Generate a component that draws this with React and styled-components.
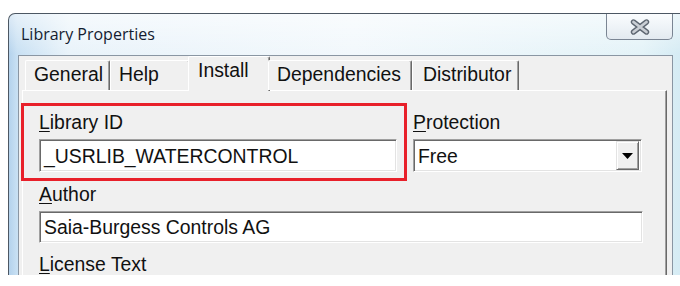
import React from "react";
import styled, { createGlobalStyle } from "styled-components";

const Global = createGlobalStyle`
  html, body { margin: 0; padding: 0; background: #fff; }
  * { box-sizing: border-box; }
`;

const Page = styled.div`
  width: 680px;
  height: 286px;
  overflow: hidden;
  background: #fff;
  padding: 13px 0 0 8px;
`;

const Window = styled.div`
  width: 690px;
  height: 262px;
  overflow: hidden;
  border: 1px solid #4c5763;
  border-bottom: none;
  border-top-left-radius: 7px;
  display: flex;
  flex-direction: column;
  background:
    linear-gradient(180deg, rgba(255,255,255,0.55) 0, rgba(255,255,255,0) 40px),
    linear-gradient(90deg, #b4d2ec 0, #c8e0f3 8px, #e9f3fa 60px, #f2f8fc 50%, #e4f3f8 92%, #cfe8f2 100%);
`;

const TitleBar = styled.div`
  width: 664px;
  height: 41px;
  flex: none;
  display: flex;
  align-items: flex-start;
  padding-left: 12px;
`;

const Title = styled.div`
  font-family: "Open Sans", "Noto Sans", sans-serif;
  font-size: 16px;
  line-height: 20px;
  color: #141c30;
  padding-top: 10px;
`;

const CloseButton = styled.div`
  margin-left: auto;
  margin-top: -1px;
  width: 67px;
  height: 27px;
  border: 1px solid #7a8593;
  border-top: none;
  border-radius: 0 0 5px 5px;
  background: linear-gradient(180deg, #fbfdfe 0%, #eef3f7 55%, #e3eaf0 100%);
  display: flex;
  align-items: center;
  justify-content: center;
  padding-top: 1px;
`;

const Body = styled.div`
  flex: 1;
  display: flex;
  padding-left: 9px;
`;

const Client = styled.div`
  width: 655px;
  background: #f0f0f0;
  border-top: 1px solid #8a96a3;
  border-left: 1px solid #8a96a3;
  border-right: 1px solid #8a96a3;
  display: flex;
  flex-direction: column;
  padding-left: 3px;
`;

const TabStrip = styled.div`
  height: 34px;
  display: flex;
  align-items: flex-end;
  padding-left: 3px;
  position: relative;
  z-index: 1;
`;

const Tab = styled.div`
  width: ${(p) => p.$w}px;
  height: ${(p) => (p.$active ? 35 : 30)}px;
  margin: ${(p) => (p.$active ? "0 -2px -1px -2px" : "0")};
  padding-left: ${(p) => p.$pl}px;
  padding-top: 2px;
  background: #f0f0f0;
  border-top: 1px solid #ffffff;
  border-left: 1px solid #ffffff;
  border-right: 1px solid #696969;
  box-shadow: inset -1px 0 0 #a0a0a0;
  border-radius: 2px 2px 0 0;
  font-family: "Liberation Sans", Arial, sans-serif;
  font-size: 19.4px;
  line-height: 22px;
  color: #111;
  white-space: nowrap;
`;

const TabBody = styled.div`
  position: relative;
  flex: 1;
  width: 645px;
  background: #f0f0f0;
  border-top: 1px solid #ffffff;
  border-left: 1px solid #ffffff;
  border-right: 1px solid #696969;
  box-shadow: inset -1px 0 0 #a0a0a0;
  padding: 20px 0 0 16px;
  font-family: "Liberation Sans", Arial, sans-serif;
  font-size: 19.4px;
  line-height: 22px;
  color: #111;
`;

const Row = styled.div`
  display: flex;
  gap: 16px;
`;

const Field = styled.div`
  display: flex;
  flex-direction: column;
  width: ${(p) => p.$w}px;
  margin-top: ${(p) => p.$mt || 0}px;
`;

const Label = styled.div`
  height: 22px;
  margin-bottom: ${(p) => (p.$last ? 0 : 6)}px;
  white-space: nowrap;
  u { text-decoration-thickness: 1px; text-underline-offset: 2px; }
`;

const Input = styled.div`
  height: ${(p) => p.$h}px;
  background: #fff;
  border-top: 1px solid #a0a0a0;
  border-left: 1px solid #a0a0a0;
  border-right: 1px solid #ffffff;
  border-bottom: 1px solid #ffffff;
  box-shadow: inset 1px 1px 0 #696969, inset -1px -1px 0 #e3e3e3;
  display: flex;
  align-items: center;
  padding-left: 4px;
  white-space: nowrap;
  overflow: hidden;
`;

const Select = styled(Input)`
  padding-right: 2px;
  justify-content: space-between;
`;

const DropButton = styled.div`
  width: 23px;
  height: 29px;
  background: #f0f0f0;
  border-top: 1px solid #e3e3e3;
  border-left: 1px solid #e3e3e3;
  border-right: 1px solid #696969;
  border-bottom: 1px solid #696969;
  box-shadow: inset 1px 1px 0 #fff, inset -1px -1px 0 #a0a0a0;
  display: flex;
  align-items: center;
  justify-content: center;
`;

const Highlight = styled.div`
  position: absolute;
  left: -2px;
  top: 12px;
  width: 386px;
  height: 78px;
  border: 3px solid #e8202a;
  pointer-events: none;
`;

const tabs = [
  { label: "General", w: 85, pl: 8 },
  { label: "Help", w: 80, pl: 8 },
  { label: "Install", w: 82, pl: 9, active: true },
  { label: "Dependencies", w: 144, pl: 8 },
  { label: "Distributor", w: 107, pl: 10 },
];

export default function App() {
  return (
    <>
      <Global />
      <Page>
        <Window>
          <TitleBar>
            <Title>Library Properties</Title>
            <CloseButton>
              <svg width="20" height="16" viewBox="0 0 20 16">
                <path d="M3.5 3 L16.5 13 M16.5 3 L3.5 13" stroke="#5d6671" strokeWidth="5.4" strokeLinecap="round" fill="none" />
                <path d="M3.5 3 L16.5 13 M16.5 3 L3.5 13" stroke="#c9ced4" strokeWidth="2.8" strokeLinecap="round" fill="none" />
              </svg>
            </CloseButton>
          </TitleBar>
          <Body>
            <Client>
              <TabStrip>
                {tabs.map((t) => (
                  <Tab key={t.label} $w={t.w} $pl={t.pl} $active={t.active}>
                    {t.label}
                  </Tab>
                ))}
              </TabStrip>
              <TabBody>
                <Row>
                  <Field $w={358}>
                    <Label><u>L</u>ibrary ID</Label>
                    <Input $h={33}>_USRLIB_WATERCONTROL</Input>
                  </Field>
                  <Field $w={229}>
                    <Label><u>P</u>rotection</Label>
                    <Select $h={33}>
                      <span>Free</span>
                      <DropButton>
                        <svg width="11" height="6" viewBox="0 0 11 6">
                          <polygon points="0,0 11,0 5.5,6" fill="#000" />
                        </svg>
                      </DropButton>
                    </Select>
                  </Field>
                </Row>
                <Field $w={604} $mt={11}>
                  <Label><u>A</u>uthor</Label>
                  <Input $h={32}>Saia-Burgess Controls AG</Input>
                </Field>
                <Field $w={604} $mt={10}>
                  <Label $last><u>L</u>icense Text</Label>
                </Field>
                <Highlight />
              </TabBody>
            </Client>
          </Body>
        </Window>
      </Page>
    </>
  );
}
